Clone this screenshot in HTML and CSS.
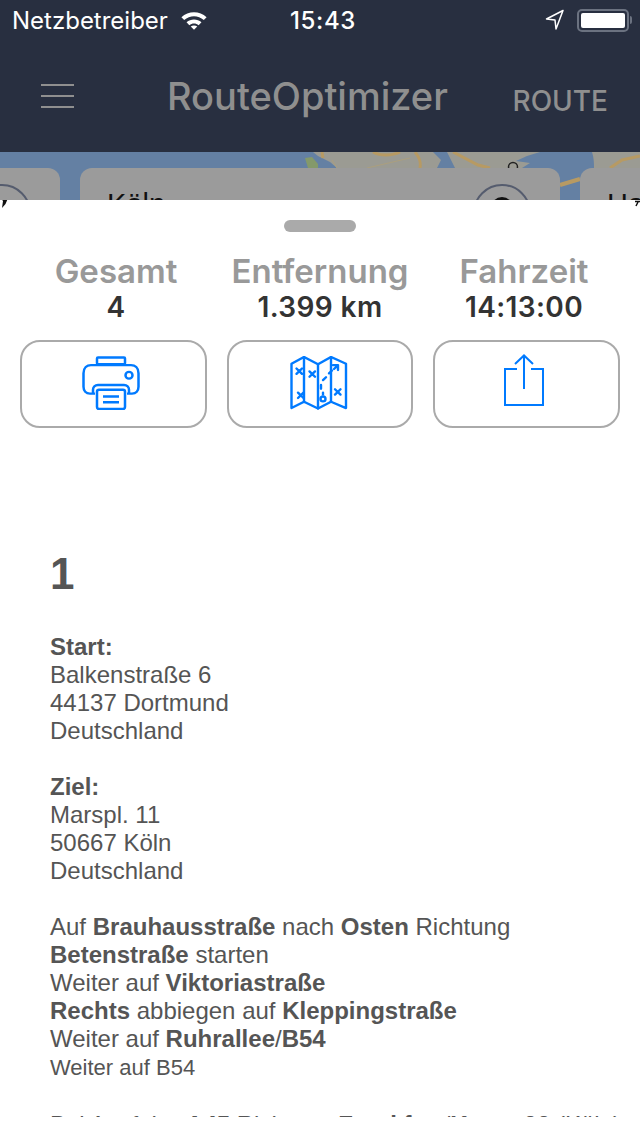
FILE: index.html
```html
<!DOCTYPE html>
<html lang="de">
<head>
  <meta charset="UTF-8" />
  <meta name="viewport" content="width=device-width, initial-scale=1.0"/>
  <title>RouteOptimizer</title>
  <link rel="stylesheet" href="styles.css">
</head>
<body>
  <div class="status-bar">
    <div class="status-left">
      <span>Netzbetreiber</span>
      <svg class="wifi" width="28" height="21" viewBox="0 0 30 22">
        <path d="M1.5 7.500C9 .5 21 .5 28.500 7.500L25.500 10.500C19.500 5 10.500 5 4.500 10.500Z" fill="#fff"/>
        <path d="M7 13C11.500 9 18.500 9 23 13L20 16C17 13.500 13 13.500 10 16Z" fill="#fff"/>
        <path d="M11.500 17.500C13.500 16 16.500 16 18.500 17.500L15 21Z" fill="#fff"/>
      </svg>
    </div>
    <div class="status-time">15:43</div>
    <div class="status-right">
      <svg width="19" height="22" viewBox="0 0 19 22">
        <path d="M18 1.500L1.500 10L10 11L11 20Z" fill="none" stroke="#fff" stroke-width="1.500" stroke-linejoin="round"/>
      </svg>
      <div class="battery"><div class="battery-fill"></div></div>
      <div class="battery-tip"></div>
    </div>
  </div>

  <header class="nav-bar">
    <button class="menu-btn" aria-label="Menu"><span></span><span></span><span></span></button>
    <h1 class="nav-title">RouteOptimizer</h1>
    <div class="nav-action">ROUTE</div>
  </header>

  <div class="map">
    <svg class="map-art" width="640" height="48" viewBox="0 0 640 48">
      <path d="M313 0H640V16H337L330 10L318 4Z" fill="#9b9b93"/>
      <path d="M433 0H447L455 16H437L441 8Z" fill="#6480a3"/>
      <path d="M516 9L527 4L540 0H592C594 6 594 12 594 16H522L530 11Z" fill="#6480a3"/>
      <path d="M305 6L312 5L318 12L318 16H308Z" fill="#84996a"/>
      <path d="M367 16L410 6M337 16L332 8" fill="none" stroke="#ab9f7e" stroke-width="1"/>
      <path d="M322 0L323 6M373 0C380 4 392 4 400 0M415 0C420 6 421 10 420 16M453 0L478 13L490 16M610 16L622 8L640 4" fill="none" stroke="#b79a63" stroke-width="3"/>
      <path d="M560 33L580 27" stroke="#b79a63" stroke-width="4"/>
      <circle cx="513" cy="15" r="4.500" fill="none" stroke="#222" stroke-width="1.500"/>
    </svg>
    <div class="map-cards">
      <div class="map-card map-card-side">
        <div class="card-circle"></div>
      </div>
      <div class="map-card map-card-main">
        <span class="card-city">Köln</span>
        <div class="card-circle"><div class="card-dot"></div></div>
      </div>
      <div class="map-card map-card-side">
        <span class="card-city">Ha</span>
      </div>
    </div>
  </div>

  <main class="sheet">
    <svg class="corner-mark corner-left" width="9" height="12" viewBox="0 0 9 12">
      <path d="M8 0L1 1.500L3 4L2 11L5.500 7L7 3.500Z" fill="#111"/>
    </svg>
    <svg class="corner-mark corner-right" width="7" height="10" viewBox="0 0 7 10">
      <path d="M1 1C3 0 6 0 7 1M2 4.500H7M5 5L3 9" fill="none" stroke="#111" stroke-width="1.500"/>
    </svg>
    <div class="grabber"></div>

    <section class="stats">
      <div class="stat">
        <div class="stat-label">Gesamt</div>
        <div class="stat-value">4</div>
      </div>
      <div class="stat">
        <div class="stat-label">Entfernung</div>
        <div class="stat-value">1.399 km</div>
      </div>
      <div class="stat">
        <div class="stat-label">Fahrzeit</div>
        <div class="stat-value">14:13:00</div>
      </div>
    </section>

    <section class="actions">
      <button class="action-btn" aria-label="Drucken">
        <svg class="icon-print" width="58" height="54" viewBox="0 0 58 56" preserveAspectRatio="none" fill="none" stroke="#007aff" stroke-width="2.500" stroke-linejoin="round">
          <rect x="15" y="1.500" width="28" height="7" rx="1"/>
          <path d="M13 39H8C4 39 1.500 36 1.500 32V18C1.500 12 5 9.500 9 9.500H49C53 9.500 56.500 12 56.500 18V32C56.500 36 54 39 50 39H45"/>
          <path d="M11 39V35C11 32 13 30 16 30H42C45 30 47 32 47 35V39"/>
          <rect x="15" y="35" width="28" height="20" rx="2"/>
          <circle cx="47" cy="20" r="3.500"/>
          <path d="M21 42H37M21 48H37"/>
        </svg>
      </button>
      <button class="action-btn" aria-label="Karte">
        <svg class="icon-map" width="58" height="54" viewBox="0 0 58 56" preserveAspectRatio="none" fill="none" stroke="#007aff" stroke-width="2.400" stroke-linejoin="round" stroke-linecap="round">
          <path d="M1.500 8L14 1L28 8.500L41 1L56 8V54L41 47.500L28 54.500L14 47.500L1.500 54Z"/>
          <path d="M14 1V47.500M28 8.500V54.500M41 1V47.500"/>
          <path d="M6.500 13L12 18.500M12 13L6.500 18.500M8 38L13.500 43.500M13.500 38L8 43.500M19.500 16L25 21.500M25 16L19.500 21.500M45 34.500L50.500 40M50.500 34.500L45 40"/>
          <path d="M31 34V30M33 25L36 22M39 18L42 15" />
          <path d="M43 9.500L48 9.500L48 14.500M48 9.500L44 13.500"/>
          <path d="M33 38V40"/>
          <circle cx="33" cy="44.500" r="2.500"/>
        </svg>
      </button>
      <button class="action-btn" aria-label="Teilen">
        <svg class="icon-share" width="40" height="52" viewBox="0 0 40 52" fill="none" stroke="#007aff" stroke-width="2">
          <path d="M13 15H1V51H39V15H27"/>
          <path d="M20 35V2M11 10L20 1.500L29 10"/>
        </svg>
      </button>
    </section>

    <article class="route">
      <h2 class="route-number">1</h2>
      <p class="route-block"><b>Start:</b><br>Balkenstraße 6<br>44137 Dortmund<br>Deutschland</p>
      <p class="route-block"><b>Ziel:</b><br>Marspl. 11<br>50667 Köln<br>Deutschland</p>
      <p class="route-block route-steps">Auf <b>Brauhausstraße</b> nach <b>Osten</b> Richtung<br>
        <b>Betenstraße</b> starten<br>
        Weiter auf <b>Viktoriastraße</b><br>
        <b>Rechts</b> abbiegen auf <b>Kleppingstraße</b><br>
        Weiter auf <b>Ruhrallee</b>/<b>B54</b><br>
        <small>Weiter auf B54</small></p>
      <p class="route-block route-last">Bei Ausfahrt <b>A45</b> Richtung <b>Frankfurt</b>/<b>Kreuz</b> 22 (Köln)</p>
    </article>
  </main>
</body>
</html>
```

FILE: styles.css
```css
html, body {
  margin: 0;
  height: 1136px;
  overflow: hidden;
}
body {
  font-family: "Liberation Sans", Arial, sans-serif;
  background-color: #fff;
  display: flex;
  flex-direction: column;
}
.status-bar {
  height: 40px;
  background-color: #282f40;
  color: #fff;
  font-family: Inter, sans-serif;
  font-size: 24px;
  display: grid;
  grid-template-columns: 1fr auto 1fr;
  align-items: center;
  padding: 0 8px 0 12px;
  flex-shrink: 0;
}
.status-left {
  display: flex;
  align-items: center;
  gap: 12px;
}
.status-time {
  font-weight: 500;
  letter-spacing: 0.6px;
  padding-left: 2px;
}
.status-right {
  display: flex;
  align-items: center;
  justify-content: flex-end;
}
.status-right svg {
  margin-right: 13px;
}
.battery {
  width: 44px;
  height: 15px;
  border: 2px solid #6b7280;
  border-radius: 5px;
  padding: 2px;
}
.battery-fill {
  width: 100%;
  height: 100%;
  background-color: #fff;
  border-radius: 2px;
}
.battery-tip {
  width: 2px;
  height: 8px;
  margin-left: 1px;
  background-color: #6b7280;
  border-radius: 0 2px 2px 0;
}
.nav-bar {
  height: 112px;
  background-color: #282f40;
  display: flex;
  align-items: center;
  flex-shrink: 0;
}
.menu-btn {
  width: 33px;
  margin-left: 41px;
  padding: 0;
  border: none;
  background: none;
  display: flex;
  flex-direction: column;
  gap: 9px;
}
.menu-btn span {
  display: block;
  height: 2px;
  background-color: #8f8f8f;
}
.nav-title {
  margin: 0 0 0 93px;
  font-family: Inter, sans-serif;
  font-size: 38px;
  font-weight: 500;
  color: #8f8f8f;
}
.nav-action {
  margin-left: auto;
  margin-right: 32px;
  padding-top: 10px;
  font-family: Inter, sans-serif;
  font-size: 28px;
  font-weight: 500;
  color: #8f8f8f;
}
.map {
  height: 48px;
  position: relative;
  overflow: hidden;
  background-color: #6480a3;
  flex-shrink: 0;
}
.map-art {
  position: absolute;
  top: 0;
  left: 0;
}
.map-cards {
  position: absolute;
  top: 16px;
  left: -420px;
  display: flex;
  gap: 20px;
}
.map-card {
  width: 480px;
  height: 120px;
  flex-shrink: 0;
  background-color: #9b9b9b;
  border-radius: 12px;
  display: flex;
  justify-content: space-between;
  padding: 20px 29px 0 27px;
  box-sizing: border-box;
}
.map-card-side {
  justify-content: flex-end;
}
.map-card-side:last-child {
  justify-content: flex-start;
}
.card-city {
  font-size: 29px;
  color: #111;
}
.card-circle {
  width: 58px;
  height: 58px;
  margin-top: -4px;
  border: 2px solid #555c6e;
  border-radius: 50%;
  box-sizing: border-box;
  display: flex;
  justify-content: center;
}
.card-dot {
  width: 22px;
  height: 22px;
  margin-top: 11px;
  background-color: #111;
  border-radius: 50%;
}
.sheet {
  height: 936px;
  position: relative;
  background-color: #fff;
  display: flex;
  flex-direction: column;
  overflow: hidden;
  flex-shrink: 0;
}
.corner-mark {
  position: absolute;
  top: -3px;
  overflow: visible;
}
.corner-left {
  left: 0;
}
.corner-right {
  right: 0;
}
.grabber {
  width: 72px;
  height: 12px;
  margin: 20px auto 0;
  background-color: #aaa;
  border-radius: 6px;
  flex-shrink: 0;
}
.stats {
  display: grid;
  grid-template-columns: repeat(3, 1fr);
  gap: 20px;
  padding: 0 24px;
  margin-top: 19px;
  text-align: center;
}
.stat-label {
  font-family: Inter, sans-serif;
  font-size: 33px;
  font-weight: 600;
  line-height: 40px;
  color: #999;
  white-space: nowrap;
}
.stat-value {
  font-family: Inter, sans-serif;
  font-size: 28px;
  font-weight: 600;
  letter-spacing: 0.4px;
  line-height: 32px;
  color: #333;
  white-space: nowrap;
}
.actions {
  display: grid;
  grid-template-columns: repeat(3, 1fr);
  gap: 20px;
  padding: 0 20px;
  margin-top: 17px;
}
.action-btn {
  height: 88px;
  padding: 0;
  background-color: #fff;
  border: 2px solid #aaa;
  border-radius: 20px;
  display: flex;
  align-items: center;
  justify-content: center;
}
.icon-print {
  margin: 0 5px 2px 0;
}
.icon-map {
  margin: 0 2px 2px 0;
}
.icon-share {
  margin: 0 6px 8px 0;
}
.route {
  height: 689px;
  overflow: hidden;
  padding: 0 50px;
  color: #555;
  font-size: 24px;
  line-height: 28px;
  flex-shrink: 0;
}
.route-number {
  margin: 120px 0 33px;
  font-size: 44px;
  line-height: 52px;
  font-weight: bold;
}
.route-block {
  margin: 0 0 28px;
}
.route-steps {
  margin-bottom: 29px;
}
.route-last {
  white-space: nowrap;
}
.route-block small {
  font-size: 22px;
}
```
